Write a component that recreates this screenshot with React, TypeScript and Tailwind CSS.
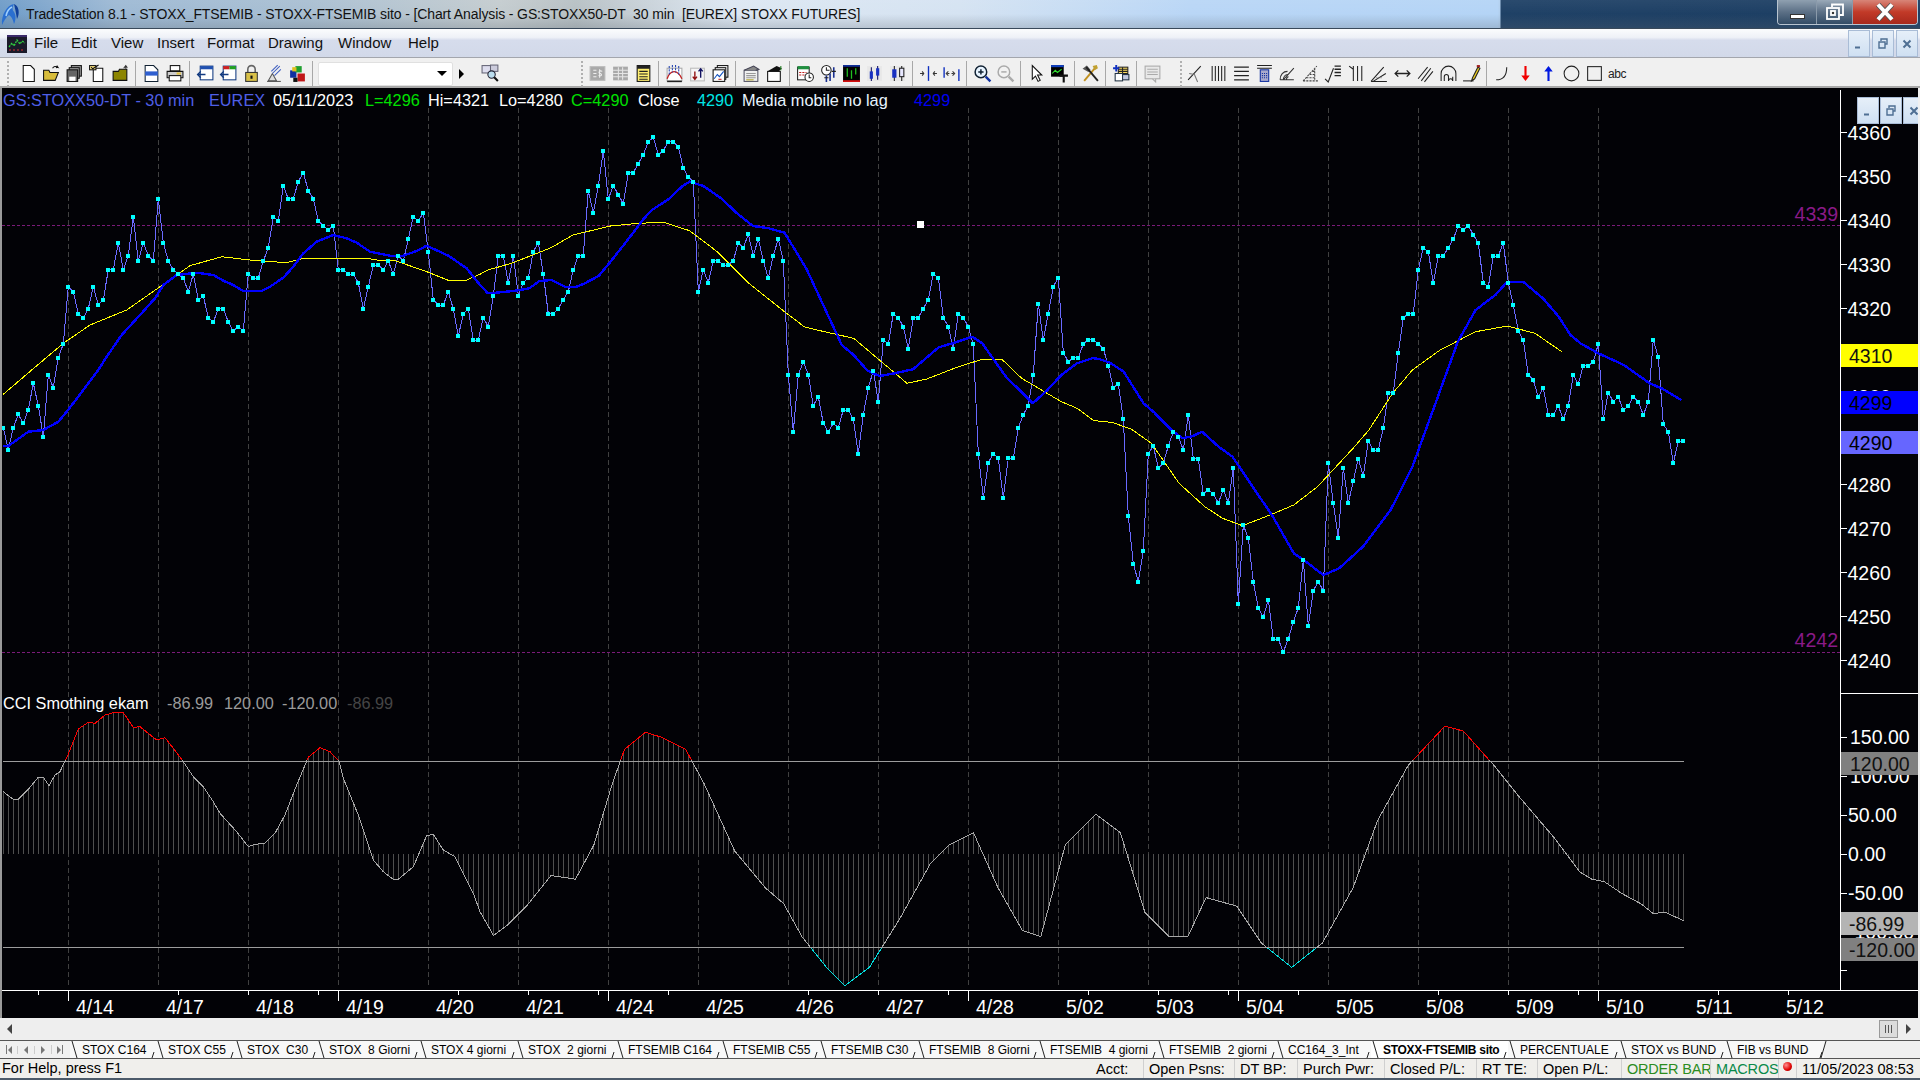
import React from "react";

const y9 = [1013,1080,1013,973,1000,960,880,947,1040,855,893,803,762,590,605,672,684,656,590,645,630,539,539,458,539,497,380,513,458,497,513,326,458,513,539,552,565,605,552,630,618,684,696,656,656,696,723,710,723,551,564,564,513,473,380,393,288,326,326,275,248,302,326,393,407,420,407,539,539,552,552,578,657,590,525,525,539,513,552,497,513,447,380,393,368,485,630,645,645,605,657,738,672,657,750,750];
const y11 = [593,620,527,407,407,488,407,527,488,473,395,368,461,581,581,566,539,515,449,407,407,212,279,197,92,237,197,224,251,158,158,131,104,65,52,104,92,65,65,80,145,171,185,515,449,488,422,422,435,435,422,368,383,343,407,356,422,474,407,356,422,764,935,764,725,764,857,830,910,936,910,923,870,870,897,1001,884,803,752,845,659,672,581,593,620,686,593,593,566,539,461,473,593,620,686,581,593,620,672,1001,1133,1028,1001,1015,1133,1015,1015,923,884,857,764,553,659,581,500,473,698,725,713,713,672,659,659,672];
const y12 = [386,437,504,491,597,887,1031,1085,993,701,678,744,730,678,636,650,690,585,716,716,821,809,821,849,809,849,743,1151,915,954,1085,1164,1191,1139,1257,1257,1296,1257,1205,1164,1020,1218,1112,1085,1112,730,849,954,743,849,783,716,769,663,690,690,624,518,518,399,294,281,281,150,83,96,188,108,108,83,57,17,30,17,44,69,188,201,108,108,69,188,255,333,360,465,480,531,504,585,585,558,597,558,465,492,437,437,425,372,597,518,545,531,570,558,531,545,585,545,359,412,612,636,729,663,663];
const closes = [...y9.map(v => 90 + v / 3), ...y11.map(v => 120 + v / 3), ...y12.map(v => 220 + v / 3)];
const closePts = closes.map((y, i) => [3.3 + 5 * i, y] as [number, number]);

type P = [number, number];
const f9 = (a: P[]): P[] => a.map(([x, y]) => [x / 3, 90 + y / 3]);
const f11 = (a: P[]): P[] => a.map(([x, y]) => [480 + x / 2.529, 120 + y / 3]);
const f12 = (a: P[]): P[] => a.map(([x, y]) => [1100 + x / 2.529, 220 + y / 3]);
const str = (a: P[]) => a.map(([x, y]) => `${x.toFixed(1)},${y.toFixed(1)}`).join(" ");

const blue: P[] = [
  ...f9([[10,1068],[25,1068],[50,1050],[85,1025],[130,1020],[175,995],[200,965],[235,920],[295,840],[320,800],[365,735],[420,675],[465,625],[490,585],[530,555],[590,548],[640,555],[670,572],[700,585],[730,603],[785,603],[810,590],[850,563],[880,530],[910,490],[950,455],[1000,435],[1040,445],[1070,458],[1110,485],[1170,497],[1210,497],[1250,483],[1280,467],[1345,497],[1400,535],[1440,585]]),
  ...f11([[20,520],[40,518],[90,512],[125,505],[150,483],[180,480],[215,500],[240,502],[265,490],[300,468],[330,425],[370,365],[415,295],[435,270],[480,235],[510,200],[530,185],[565,198],[610,235],[650,280],[690,318],[730,325],[770,338],[825,445],[915,675],[945,705],[980,752],[1010,768],[1040,762],[1095,748],[1160,682],[1200,668],[1245,650],[1270,670],[1330,770],[1398,850],[1435,810],[1470,765],[1510,730],[1550,714],[1568,718]]),
  ...f12([[25,428],[60,455],[110,550],[135,575],[185,635],[210,655],[235,648],[258,635],[300,680],[335,710],[400,825],[435,885],[490,1000],[515,1020],[565,1065],[605,1045],[665,980],[735,870],[790,740],[850,545],[905,365],[950,270],[1000,225],[1030,185],[1070,185],[1120,235],[1160,290],[1190,345],[1215,370],[1260,400],[1325,435],[1390,490],[1420,505],[1470,540]]),
];
const yellow: P[] = [
  ...f9([[10,913],[95,840],[190,760],[270,705],[380,660],[480,590],[570,527],[665,500],[750,510],[860,518],[910,505],[1100,505],[1130,510],[1180,510],[1280,545],[1350,573],[1400,570],[1440,553]]),
  ...f11([[20,450],[80,430],[180,383],[235,345],[330,318],[400,310],[465,307],[530,332],[600,395],[680,490],[770,575],[820,620],[860,632],[945,655],[1080,790],[1130,777],[1210,740],[1270,718],[1320,718],[1370,775],[1470,845],[1510,865],[1550,900],[1568,904]]),
  ...f12([[30,607],[80,628],[130,670],[200,790],[265,860],[310,895],[360,917],[430,885],[490,855],[550,800],[640,685],[680,630],[740,520],[790,450],[860,390],[950,335],[1030,318],[1100,340],[1170,397]]),
];
const cci: P[] = [
  ...([[10,335],[40,358],[55,358],[90,322],[115,292],[130,292],[147,317],[165,285],[180,275],[205,222],[235,147],[265,127],[285,130],[315,105],[345,97],[370,98],[400,142],[420,140],[470,180],[495,173],[520,205],[550,245],[580,290],[610,320],[640,365],[660,400],[710,455],[745,500],[765,493],[795,490],[825,460],[855,405],[890,315],[925,232],[960,203],[990,215],[1017,243],[1030,295],[1075,405],[1120,540],[1150,575],[1180,598],[1195,598],[1240,560],[1280,467],[1300,463],[1330,510],[1365,530],[1395,590],[1420,640],[1440,695]] as P[]).map(([x, y]) => [x / 3, 680 + y / 3] as P),
  ...([[403,764],[415,755],[430,740],[450,715],[470,718],[485,690],[500,640],[510,612],[527,598],[540,602],[560,612],[575,640],[600,695],[625,725],[640,738],[655,765],[675,790],[690,805],[710,790],[735,750],[760,705],[775,690],[795,680],[815,725],[835,760],[850,765],[870,690],[895,665],[915,680],[935,745],[955,765],[970,765],[985,733],[1010,740],[1030,770],[1055,790],[1080,770],[1105,725],[1125,670],[1150,625],[1180,593],[1195,597],[1220,625],[1240,650],[1270,685],[1290,712],[1300,718],[1310,720],[1325,730],[1340,738],[1350,746],[1360,745],[1375,752]] as P[]).map(([x, y]) => [x * 1.2245, y * 1.2245] as P),
];
const at = (a: P[], x: number) => {
  for (let i = 1; i < a.length; i++) {
    if (x <= a[i][0]) {
      const [x0, y0] = a[i - 1];
      const [x1, y1] = a[i];
      return y0 + ((y1 - y0) * (x - x0)) / (x1 - x0);
    }
  }
  return a[a.length - 1][1];
};
const hist = closePts.map(([x]) => Math.round(x));

const gridX = Array.from({ length: 18 }, (_, k) => 68 + 90 * k);
const priceLabels = [4360,4350,4340,4330,4320,4310,4300,4290,4280,4270,4260,4250,4240];
const dates = ["4/14","4/17","4/18","4/19","4/20","4/21","4/24","4/25","4/26","4/27","4/28","5/02","5/03","5/04","5/05","5/08","5/09","5/10","5/11","5/12"];
const shortTicks = [38,178,248,318,458,528,598,668,808,878,948,1088,1158,1228,1298,1438,1508,1578,1718,1788];
const longTicks = [68,338,608,968,1238,1598];
const cciTicks: [number, string, number][] = [[737,"150.00",1850],[776,"100.00",1850],[815,"50.00",1848],[854,"0.00",1848],[893,"-50.00",1848],[932,"-100.00",1848]];
const headItems: [number, string, string][] = [
  [3,"GS:STOXX50-DT - 30 min","#4f5fe6"],[209,"EUREX","#4f5fe6"],[273,"05/11/2023","#ffffff"],[365,"L=4296","#00e000"],[428,"Hi=4321","#ffffff"],[499,"Lo=4280","#ffffff"],[571,"C=4290","#00e000"],[638,"Close","#ffffff"],[697,"4290","#00e5e5"],[742,"Media mobile no lag","#e8f4ff"],[914,"4299","#0000f0"],
];
const cciHead: [number, string, string][] = [[3,"CCI Smothing ekam","#ffffff"],[167,"-86.99","#9a9a9a"],[224,"120.00","#9a9a9a"],[282,"-120.00","#9a9a9a"],[347,"-86.99","#454545"]];

function Chart() {
  return (
    <svg width={1916} height={930} viewBox="2 88 1916 930" className="block">
      <defs>
        <clipPath id="over"><rect x="0" y="680" width="1920" height="80" /></clipPath>
        <clipPath id="under"><rect x="0" y="948" width="1920" height="60" /></clipPath>
      </defs>
      <g shapeRendering="crispEdges">
        {gridX.map(x => <line key={x} x1={x + 0.5} x2={x + 0.5} y1={108} y2={987} stroke="#404040" strokeDasharray="5 3" />)}
        <line x1={2} x2={1840} y1={225} y2={225} stroke="#7a1a78" strokeDasharray="3 2" />
        <line x1={2} x2={1840} y1={652.5} y2={652.5} stroke="#7a1a78" strokeDasharray="3 2" />
        {hist.map(x => <line key={x} x1={x + 0.5} x2={x + 0.5} y1={854} y2={at(cci, x)} stroke="#4e4e4e" />)}
        <line x1={3} x2={1684} y1={761.5} y2={761.5} stroke="#9c9c9c" />
        <line x1={3} x2={1684} y1={947.5} y2={947.5} stroke="#9c9c9c" />
      </g>
      <g shapeRendering="crispEdges" fill="none">
        <polyline points={str(closePts)} stroke="#6a6aff" strokeWidth={1} />
        <polyline points={str(yellow)} stroke="#ffff00" strokeWidth={1} />
        <polyline points={str(blue)} stroke="#0000ff" strokeWidth={2.4} strokeLinejoin="round" />
        <polyline points={str(cci)} stroke="#a8a8a8" strokeWidth={1} />
        <polyline points={str(cci)} stroke="#ff0000" strokeWidth={1} clipPath="url(#over)" />
        <polyline points={str(cci)} stroke="#00e0e0" strokeWidth={1} clipPath="url(#under)" />
      </g>
      {closePts.map(([x, y]) => <rect key={x} x={Math.round(x) - 2} y={Math.round(y) - 2} width={4} height={4} fill="#00ffff" shapeRendering="crispEdges" />)}
      <rect x={917} y={221} width={7} height={7} fill="#ffffff" />

      <g className="text-[16.3px]">
        {headItems.map(([x, t, c]) => <text key={x} x={x} y={106} fill={c} xmlSpace="preserve">{t}</text>)}
        {cciHead.map(([x, t, c]) => <text key={x} x={x} y={709} fill={c}>{t}</text>)}
      </g>
      <g className="text-[19.5px]">
        <text x={1838} y={221} fill="#8a1a88" textAnchor="end">4339</text>
        <text x={1838} y={647} fill="#8a1a88" textAnchor="end">4242</text>
        <g shapeRendering="crispEdges">
          <line x1={1840.5} x2={1840.5} y1={90} y2={990} stroke="#ffffff" />
          <line x1={1840} x2={1918} y1={693} y2={693} stroke="#ffffff" />
          <line x1={2} x2={1918} y1={990.5} y2={990.5} stroke="#ffffff" />
          {shortTicks.map(x => <line key={x} x1={x} x2={x} y1={990} y2={995} stroke="#ffffff" />)}
          {longTicks.map(x => <line key={x} x1={x} x2={x} y1={990} y2={1001} stroke="#ffffff" />)}
          {priceLabels.map(p => { const y = 132 + (44 * (4360 - p)) / 10; return <line key={p} x1={1841} x2={1847} y1={y} y2={y} stroke="#ffffff" />; })}
          {[...cciTicks.map(t => t[0]), 970].map(y => <line key={y} x1={1841} x2={1847} y1={y} y2={y} stroke="#ffffff" />)}
        </g>
        {priceLabels.map(p => <text key={p} x={1847.500} y={140 + (44 * (4360 - p)) / 10} fill="#ffffff">{p}</text>)}
        {cciTicks.map(([y, t, x]) => <text key={t} x={x} y={y + 7} fill="#ffffff">{t}</text>)}
        {dates.map((d, i) => <text key={d} x={76 + 90 * i} y={1014} fill="#ffffff">{d}</text>)}

        <rect x={1841} y={344} width={77} height={23} fill="#ffff00" />
        <text x={1849} y={363} fill="#111">4310</text>
        <rect x={1841} y={391} width={77} height={23} fill="#0000ff" />
        <text x={1849} y={410} fill="#000">4299</text>
        <rect x={1841} y={431} width={77} height={23} fill="#6666ff" />
        <text x={1849} y={450} fill="#000">4290</text>
        <rect x={1841} y={752} width={77} height={23} fill="#808080" />
        <text x={1850} y={771} fill="#111">120.00</text>
        <rect x={1841} y={912} width={77} height={23} fill="#b4b4b4" />
        <text x={1849} y={931} fill="#111">-86.99</text>
        <rect x={1841} y={938} width={77} height={23} fill="#808080" />
        <text x={1849} y={957} fill="#111">-120.00</text>
      </g>
    </svg>
  );
}

function MdiBtn({ kind, w = "w-[22px]" }: { kind: number; w?: string }) {
  return (
    <div className={`flex h-[27px] shrink-0 items-center justify-center border border-[#a9bcd6] bg-[linear-gradient(180deg,#e6eff9,#cfe0f2)] ${w}`}>
      <svg width={12} height={12} viewBox="0 0 12 12" fill="none" stroke="#4f6f93" strokeWidth={1.4}>
        {kind === 0 && <path d="M2 9.5h5" strokeWidth={2} />}
        {kind === 1 && <path d="M4 3V1h6v5H8M2 4h6v6H2z" />}
        {kind === 2 && <path d="M2.5 2.5l7 7M9.5 2.5l-7 7" strokeWidth={2} />}
      </svg>
    </div>
  );
}

const Ico = ({ children }: { children: React.ReactNode }) => (
  <span className="flex h-[24px] w-[23px] shrink-0 items-center justify-center">
    <svg width={19} height={19} viewBox="0 0 18 18">{children}</svg>
  </span>
);
const Sep = () => (
  <span className="flex h-[26px] w-[8px] shrink-0 justify-center"><span className="h-full w-px bg-[#a8a8a8]" /></span>
);
const Grip = () => <span className="h-[26px] w-0 shrink-0 border-l-2 border-dotted border-[#b0b0b0]" />;

const k = "#111";
const icons: Record<string, React.ReactNode> = {
  doc: <path d="M4 1.5h7l3.5 3.5v11.5H4z" fill="#fff" stroke={k} />,
  open: <><path d="M1.5 6h5l1 2h8l-3 7.5H1.5z" fill="#d8bd3c" stroke={k} /><path d="M10 4c1-2 3-2 5-1l-1-1.5M15 3l-1.800 .6" fill="none" stroke={k} /></>,
  saves: <><rect x="6" y="1.500" width="9.500" height="10" fill="#999" stroke={k} /><rect x="4" y="3.500" width="9.500" height="10" fill="#aaa" stroke={k} /><rect x="2" y="5.500" width="10" height="11" fill="#666" stroke={k} /><rect x="4" y="12" width="6" height="4" fill="#fff" /></>,
  check: <><path d="M5 4h9v12.500H5z" fill="#fff" stroke={k} /><rect x="1.500" y="1.500" width="6" height="4" fill="#ffe680" stroke={k} /><path d="M3 3l1.500 1.500L10 1" fill="none" stroke={k} /></>,
  olive: <><path d="M2 7h5l1-2h7v10.500H2z" fill="#8c8500" stroke={k} /><path d="M12 4l2-2.500 1.500 2M14 1.500v3" fill="none" stroke="#333" /></>,
  blueDoc: <><path d="M3 1.500h8l4 4v11H3z" fill="#fff" stroke="#123" /><rect x="3" y="7" width="12" height="4" fill="#2f5fd0" /></>,
  print: <><rect x="5" y="1.500" width="9" height="5" fill="#fff" stroke={k} /><path d="M2 7h15v6H2z" fill="#ccc" stroke={k} /><rect x="4" y="11" width="11" height="5" fill="#fff" stroke={k} /><rect x="11" y="8" width="4" height="2" fill="#e0c040" /></>,
  winA: <><rect x="4" y="2" width="12" height="13" fill="#fff" stroke="#123a80" /><rect x="4" y="2" width="12" height="3" fill="#2050b0" /><path d="M9 10H1.500M4.500 7l-3 3 3 3" fill="none" stroke="#123a80" strokeWidth={1.3} /></>,
  winB: <><rect x="4" y="2" width="12" height="13" fill="#fff" stroke="#123a80" /><rect x="4" y="2" width="6" height="3" fill="#d02020" /><rect x="10" y="2" width="6" height="3" fill="#20a020" /><path d="M9 10H1.500M4.500 7l-3 3 3 3" fill="none" stroke="#123a80" strokeWidth={1.3} /></>,
  lock: <><path d="M5.500 8V5a3.500 3.500 0 017 0v3" fill="none" stroke="#666" strokeWidth={1.5} /><rect x="3.500" y="8" width="11" height="8.500" fill="#d8c048" stroke="#333" /><rect x="8" y="11" width="2" height="3" fill="#111" /></>,
  sat: <><path d="M3 16l4-7 4 7z" fill="#ddd" stroke="#555" /><path d="M7 9l7-7M9 11l6-6M6 7l6-6" stroke="#4060c0" /><path d="M2 16.500h13" stroke="#555" /></>,
  cubes: <><rect x="2" y="6" width="6" height="7" fill="#1030a0" /><rect x="7" y="2" width="6" height="6" fill="#20a030" /><rect x="9" y="9" width="7" height="7.500" fill="#c01818" /><rect x="4" y="3" width="4" height="4" fill="#e0c020" /><rect x="5" y="13" width="4" height="4" fill="#111" /></>,
  search: <><rect x="1" y="1.500" width="9" height="7" fill="#dde" stroke="#667" /><rect x="9" y="1" width="7" height="6" fill="#ccd" stroke="#667" /><circle cx="10" cy="10" r="3.500" fill="#bde" stroke="#223" /><path d="M12.500 12.500l3.500 3.500" stroke="#111" strokeWidth={2} /></>,
  gCalc: <><rect x="2" y="2.500" width="14" height="13" fill="#a8a8a8" stroke="#bbb" /><path d="M5 6h3M5 9h3M5 12h3" stroke="#eee" /><path d="M11 5v8M13.500 7c-3-1.500-4 1.500-2 2s2 3-1.500 2" fill="none" stroke="#eee" /></>,
  gTable: <><rect x="2" y="2.500" width="14" height="13" fill="#a8a8a8" /><path d="M2 6h14M2 9h14M2 12h14M7 3v12M11 3v12" stroke="#e5e5e5" /></>,
  yTable: <><rect x="3" y="1.500" width="12" height="15" fill="#ffef70" stroke={k} /><rect x="3" y="1.500" width="12" height="3" fill="#222" /><path d="M5 7h8M5 9.500h8M5 12h8M5 14.500h8" stroke="#222" /></>,
  arc: <><rect x="2" y="4" width="14" height="12" fill="#fff" stroke="#aaa" /><path d="M2 14c3-9 10-9 14 0" fill="none" stroke="#c02020" strokeWidth={1.300} /><path d="M4 2v9M7 1v7M10 1v7M13 2v9" stroke="#2040b0" strokeDasharray="2 1" /><path d="M2 16.500h14" stroke="#222" strokeWidth={1.400} /></>,
  arrows: <><rect x="2.500" y="4" width="13" height="12" fill="#f5f5f5" stroke="#bbb" /><path d="M6.500 7v7M4.500 12l2 2.500 2-2.500" fill="none" stroke="#901010" strokeWidth={1.300} /><path d="M12 13V5M10 7l2-2.500L14 7" fill="none" stroke="#101060" strokeWidth={1.300} /></>,
  stack: <><rect x="6" y="1.500" width="10" height="11" fill="#fff" stroke={k} /><rect x="4" y="3.500" width="10" height="11" fill="#fff" stroke={k} /><rect x="2" y="5.500" width="11" height="11" fill="#fff" stroke={k} /><path d="M3 14l3-4 2 2 4-5" fill="none" stroke="#1050c0" /><path d="M7 14.500h3" stroke="#c02020" /></>,
  note: <><rect x="2" y="6" width="13" height="10.500" fill="#f0f0f0" stroke="#556" /><path d="M2 6l9-4 5 3-3 1" fill="#888" stroke="#445" /><path d="M4 9h9M4 11h9M4 13h9" stroke="#999" /><path d="M4 15h7" stroke="#b0a020" /></>,
  house: <><rect x="2.500" y="7" width="12" height="9.500" fill="#fff" stroke={k} /><path d="M2 7l9-5 5 2-3 3z" fill="#111" /><path d="M15 2v4" stroke="#208020" /></>,
  cal: <><rect x="1.500" y="3" width="11" height="12" fill="#fff" stroke="#222" /><rect x="1.500" y="2" width="11" height="3" fill="#209040" /><path d="M3 8h7M3 10.500h6" stroke="#c02020" strokeDasharray="2 1" /><circle cx="12.500" cy="12.500" r="4" fill="#fff" stroke="#222" /><path d="M12.500 10v3h2" fill="none" stroke="#222" /></>,
  clock: <><circle cx="7" cy="6" r="4.500" fill="#fff" stroke="#222" /><path d="M7 3v3h3" fill="none" stroke="#222" /><path d="M7 11v6M10.500 9v7M14 3v10" stroke="#1a3090" strokeWidth={1.500} /><path d="M5 13h4M12 7h4" stroke="#222" /></>,
  bars: <><rect x="1" y="1" width="16" height="16" fill="#000" /><rect x="1" y="1" width="16" height="1.600" fill="#1030a0" /><rect x="1" y="15.400" width="16" height="1.600" fill="#e01010" strokeDasharray="1 1" /><path d="M5 4v8M9 6v8M13 4v6" stroke="#20c020" strokeWidth={1.200} /></>,
  cBlue: <><rect x="2" y="2" width="14" height="14" fill="#e8e8e8" /><path d="M6 3v13M12 2v13" stroke="#101060" /><rect x="4.500" y="7" width="3" height="7" fill="#1830c0" /><rect x="10.500" y="4" width="3" height="7" fill="#1830c0" /></>,
  cGrey: <><rect x="2" y="2" width="14" height="14" fill="#e8e8e8" /><path d="M6 2v14M13 2v14" stroke="#222" /><rect x="4" y="5" width="4" height="8" fill="#1830c0" /><rect x="11" y="4" width="4" height="8" fill="#e8e8ff" stroke="#222" /></>,
  sp1: <><path d="M9 2v14" stroke="#1030c0" strokeWidth={1.300} /><path d="M1 9h3M3 7l1.500 2L3 11M17 9h-3M15 7l-1.500 2 1.500 2" fill="none" stroke="#333" /></>,
  sp2: <><path d="M2 3v10M16 5v11" stroke="#1030c0" strokeWidth={1.300} /><path d="M5 9h2M9 9h2M6 7L4 9l2 2M10 7l2 2-2 2" fill="none" stroke="#333" /></>,
  zin: <><circle cx="7.500" cy="7.500" r="5.500" fill="#e8f4ff" stroke="#123" strokeWidth={1.400} /><path d="M5 7.500h5M7.500 5v5" stroke="#123" strokeWidth={1.400} /><path d="M12 12l4.500 4.500" stroke="#1030a0" strokeWidth={2.200} /></>,
  zout: <><circle cx="7.500" cy="7.500" r="5.500" fill="#f2f2f2" stroke="#aaa" strokeWidth={1.400} /><path d="M5 7.500h5" stroke="#aaa" strokeWidth={1.400} /><path d="M12 12l4.500 4.500" stroke="#aaa" strokeWidth={2.200} /></>,
  cur: <path d="M5 1.500v13l3-3 2.500 5 2-1-2.500-5h4z" fill="#fff" stroke={k} />,
  chartT: <><rect x="1" y="1" width="12" height="11" fill="#000" /><rect x="1" y="1" width="12" height="2" fill="#1040c0" /><path d="M2 9l3-3 2 2 4-3" fill="none" stroke="#30e030" /><path d="M9 11h8M13 11v6.500" stroke="#111" strokeWidth={2} /></>,
  tools: <><path d="M3 16L14 3" stroke="#c09020" strokeWidth={1.800} /><path d="M1.500 4.500l4-3 3.500 4-2 2z" fill="#555" /><path d="M5 3l11 13" stroke="#222" strokeWidth={1.800} /><path d="M11 2l4-1 1 3-3 2z" fill="#c0a030" /></>,
  add: <><rect x="6" y="3" width="9" height="6" fill="#ffe060" stroke="#222" /><path d="M6 5h9M6 7h9M10 3v6" stroke="#222" /><rect x="7" y="10" width="9" height="5" fill="#c0c8e0" stroke="#234" /><rect x="3" y="9" width="7" height="7" fill="#fff" stroke="#234" /><path d="M4 1v6M1 4h6" stroke="#1030c0" strokeWidth={1.800} /></>,
  gNote: <><rect x="2" y="2" width="14" height="12" fill="#e8e8e8" stroke="#aaa" /><path d="M4 5h10M4 7.500h10M4 10h10" stroke="#aaa" /><path d="M9 14l3 3v-3" fill="#ddd" stroke="#aaa" /></>,
  line: <><path d="M2 15L14 2" stroke="#222" /><path d="M3 9l5 1 3 7" fill="none" stroke="#777" /></>,
  vlines: <path d="M3 2v14M6 2v14M9 2v14M12 2v14M15 2v14" stroke="#222" />,
  hlines: <path d="M2 3h14M2 7h14M2 11h14M2 15h14" stroke="#222" strokeWidth={1.200} />,
  calc: <><path d="M2 1.500h14M2 4h14" stroke="#222" /><rect x="5" y="5.500" width="8" height="11" fill="#aac" stroke="#1030a0" /><path d="M6.500 9h5M6.500 11h5M6.500 13h5" stroke="#1030a0" strokeDasharray="1 1" /></>,
  fan: <><path d="M2 15c0-5 3-8 7-8M5 15c0-3 2-5 4-5M8 15c0-2 1-3 2-3M2 15h13M5 15L15 4" fill="none" stroke="#333" /></>,
  fib: <><path d="M2 16h14M2 16L15 2M5 13h8M8 10h6M11 7h3M13 4v12" fill="none" stroke="#444" strokeDasharray="2 1" /></>,
  flag: <><path d="M1 14l3 3 5-13" fill="none" stroke="#222" /><path d="M10 2h6M10 5h6M10 8h6M10 11h6" stroke="#222" strokeWidth={1.300} /></>,
  hfork: <path d="M2 2l4 3M6 2v14M10 2v14M14 2v14" fill="none" stroke="#222" />,
  angle: <><path d="M1 16.500h15M1 16.500L13 3M3 16.500L15 9" fill="none" stroke="#222" /><path d="M6 13h5" stroke="#777" strokeDasharray="1 1" /></>,
  ruler: <path d="M2 9h14M5 6L2 9l3 3M13 6l3 3-3 3" fill="none" stroke="#222" strokeWidth={1.200} />,
  slashes: <path d="M2 14L11 3M5 16L14 4M8 17L16 7" stroke="#222" />,
  ghost: <path d="M2 16V9a7 7 0 0114 0v7M5 16v-4a2 2 0 014 0v4a2 2 0 014 0M9 16v-4M13 16v-4" fill="none" stroke="#222" />,
  pen: <><path d="M1 16h10" stroke="#222" /><path d="M9 16l1-3 5-10 2 1-5 10z" fill="#f0d020" stroke="#222" /><rect x="14" y="1" width="3" height="2" fill="#a02020" /></>,
  curve: <path d="M3 15c6 0 10-4 10-12" fill="none" stroke="#222" />,
  red: <path d="M8 2h2v9h3l-4 5-4-5h3z" fill="#f00000" />,
  up: <path d="M8 16h2V7h3L9 2 5 7h3z" fill="#0018e0" />,
  circ: <circle cx="9" cy="9" r="7" fill="none" stroke="#222" />,
  rect: <rect x="2.500" y="2.500" width="13" height="13" fill="none" stroke="#222" />,
};
const toolbarGroups = [
  ["doc","open","saves","check","olive"],
  ["blueDoc","print"],
  ["winA","winB","lock","sat","cubes"],
];
const toolbarGroups2 = [
  ["gCalc","gTable","yTable"],
  ["arc","arrows","stack"],
  ["note","house"],
  ["cal","clock","bars","cBlue","cGrey"],
  ["sp1","sp2"],
  ["zin","zout"],
  ["cur","chartT"],
  ["tools"],
  ["add"],
  ["gNote"],
];
const toolbarGroups3 = [
  ["line","vlines","hlines","calc","fan","fib","flag","hfork","angle","ruler","slashes","ghost","pen"],
  ["curve","red","up","circ","rect"],
];
const Groups = ({ g }: { g: string[][] }) => (
  <>
    {g.map((grp, i) => (
      <React.Fragment key={grp[0]}>
        {i > 0 && <Sep />}
        {grp.map(n => <Ico key={n}>{icons[n]}</Ico>)}
      </React.Fragment>
    ))}
  </>
);

const menus: [string, string][] = [["File","w-[37px]"],["Edit","w-[40px]"],["View","w-[46px]"],["Insert","w-[50px]"],["Format","w-[61px]"],["Drawing","w-[70px]"],["Window","w-[70px]"],["Help","w-[40px]"]];

const tabs: [string, string, boolean?][] = [
  ["STOX C164","w-[86px]"],["STOX C55","w-[79px]"],["STOX  C30","w-[82px]"],["STOX  8 Giorni","w-[102px]"],["STOX 4 giorni","w-[97px]"],["STOX  2 giorni","w-[100px]"],
  ["FTSEMIB C164","w-[105px]"],["FTSEMIB C55","w-[98px]"],["FTSEMIB C30","w-[98px]"],["FTSEMIB  8 Giorni","w-[121px]"],["FTSEMIB  4 giorni","w-[119px]"],["FTSEMIB  2 giorni","w-[119px]"],
  ["CC164_3_Int","w-[95px]"],["STOXX-FTSEMIB sito","w-[137px]",true],["PERCENTUALE","w-[111px]"],["STOX vs BUND","w-[106px]"],["FIB vs BUND","w-[99px]"],
];

const status: [string, string, string][] = [
  ["Acct:","w-[52px] border-l-0","text-black"],["Open Psns:","w-[91px]","text-black"],["DT BP:","w-[63px]","text-black"],["Purch Pwr:","w-[87px]","text-black"],["Closed P/L:","w-[92px]","text-black"],["RT TE:","w-[61px]","text-black"],["Open P/L:","w-[84px]","text-black"],["ORDER BAR","w-[89px] pl-[4px] tracking-[-0.2px]","text-[#2c8c1e]"],["MACROS","w-[68px] tracking-[-0.2px]","text-[#0a8a4a]"],
];

export default function App() {
  return (
    <div className="flex h-[1080px] w-[1920px] flex-col overflow-hidden bg-[#f0f0f0] font-['Liberation_Sans',Arial,sans-serif] text-black">
      {/* title bar */}
      <div className="flex h-[29px] shrink-0 items-start justify-between border-b border-[#39495a] bg-[linear-gradient(180deg,rgba(255,255,255,0.05)_0%,rgba(255,255,255,0)_50%,rgba(90,100,110,0.25)_100%),linear-gradient(90deg,#6f9cc8_0%,#9db9d4_6%,#a9bfd2_16%,#c4cccf_26%,#b7c0c4_30%,#dde7f2_38%,#d5e3f2_50%,#b9d6f6_62%,#b4d4f6_78%,#b2d0ef_78.1%,#1f4166_78.2%,#1c3e63_100%)]">
        <div className="flex items-center">
          <svg width={20} height={24} viewBox="0 0 20 24" className="ml-[1px] mt-[2px] shrink-0">
            <path d="M1 22C0 12 6 2 13 1c-2 3-2 6 0 8 2 3 2 8 0 12-1-5-3-8-5-9-3 2-5 6-7 10z" fill="#2a6fd0" />
            <path d="M13 1c5 2 6 9 3 15-1-6-2-11-3-15z" fill="#0f3f9a" />
            <path d="M5 13C6 8 9 5 11 4" stroke="#9fd0ff" strokeWidth={1.500} fill="none" />
          </svg>
          <span className="ml-[5px] mt-[1px] whitespace-pre text-[14px] leading-[26px] tracking-[-0.12px] text-[#111]">TradeStation 8.1 - STOXX_FTSEMIB - STOXX-FTSEMIB sito - [Chart Analysis - GS:STOXX50-DT  30 min  [EUREX] STOXX FUTURES]</span>
        </div>
        <div className="mr-[2px] flex h-[25px] shrink-0 overflow-hidden rounded-b-[4px] border border-t-0 border-[#b8c4d0]">
          <div className="flex w-[38px] items-end justify-center bg-[linear-gradient(180deg,#8fa0b0,#5c7086_50%,#334c66)] pb-[5px]"><span className="h-[5px] w-[15px] border border-[#333] bg-white" /></div>
          <div className="flex w-[36px] items-center justify-center border-l border-[#8a9aaa] bg-[linear-gradient(180deg,#9aa9b8,#5c7086_50%,#334c66)]">
            <svg width={20} height={18} viewBox="0 0 20 18" fill="none" stroke="#fff" strokeWidth={1.800}><path d="M7 4V1.500h11V12h-3" /><rect x="2" y="5" width="12" height="11" /><rect x="6" y="8" width="4" height="4" fill="#333" /></svg>
          </div>
          <div className="flex w-[65px] items-center justify-center border-l border-[#8a9aaa] bg-[linear-gradient(180deg,#d88578,#c23a28_50%,#a8291c)]">
            <svg width={20} height={18} viewBox="0 0 20 18" fill="none"><path d="M3 1.500l14 15M17 1.500l-14 15" stroke="#555" strokeWidth={5.500} /><path d="M3 1.500l14 15M17 1.500l-14 15" stroke="#fff" strokeWidth={4} /></svg>
          </div>
        </div>
      </div>

      {/* menu bar */}
      <div className="flex h-[29px] shrink-0 items-center justify-between border-b border-[#a3a6ad] bg-[linear-gradient(180deg,#fbfcfd_0%,#eef1f7_30%,#d6dcec_40%,#d2d9e9_100%)] pl-[7px] pr-[2px] pt-[1px]">
        <div className="flex items-center">
          <svg width={20} height={18} viewBox="0 0 20 18" className="mr-[7px]">
            <rect width="20" height="18" fill="#1a1a2a" />
            <rect width="20" height="2" fill="#3a2a6a" />
            <path d="M2 12l3-4 2 3 3-6 3 4 2-3 3 2" fill="none" stroke="#30d040" strokeWidth={1.300} strokeDasharray="2 1" />
            <path d="M2 15h16" stroke="#d03030" strokeDasharray="2 2" />
          </svg>
          {menus.map(([m, w]) => <span key={m} className={`text-[15px] text-[#111] ${w}`}>{m}</span>)}
        </div>
        <div className="flex gap-[2px]">
          <MdiBtn kind={0} />
          <MdiBtn kind={1} />
          <MdiBtn kind={2} />
        </div>
      </div>

      {/* toolbar */}
      <div className="flex h-[30px] shrink-0 items-center border-b-2 border-[#a8a8a8] bg-[#f0f0f0] pl-[7px] pt-[3px]">
        <Grip />
        <span className="w-[7.500px] shrink-0" />
        <Groups g={toolbarGroups} />
        <Sep />
        <div className="ml-[1px] flex h-[24px] w-[135px] shrink-0 items-center justify-end rounded-[2px] border border-[#e0e0e0] bg-white pr-[5px]">
          <span className="h-0 w-0 border-x-[5px] border-t-[5px] border-x-transparent border-t-black" />
        </div>
        <span className="ml-[6px] h-0 w-0 shrink-0 border-y-[5px] border-l-[5px] border-y-transparent border-l-black" />
        <span className="w-[15px] shrink-0" />
        <Ico>{icons.search}</Ico>
        <span className="w-[79.500px] shrink-0" />
        <Grip />
        <span className="w-[2.500px] shrink-0" />
        <Groups g={toolbarGroups2} />
        <span className="w-[16.500px] shrink-0" />
        <Grip />
        <span className="w-[1.500px] shrink-0" />
        <Groups g={toolbarGroups3} />
        <span className="flex w-[23px] shrink-0 justify-center text-[12px] tracking-[-0.5px] text-[#222]">abc</span>
      </div>

      {/* chart */}
      <div className="relative h-[930px] shrink-0 overflow-hidden border-x-2 border-l-[#9a9a9a] border-r-[#f0f0f0] bg-[#020206]">
        <Chart />
        <div className="absolute left-[1855px] top-[9px] flex gap-[1px]">
          <MdiBtn kind={0} />
          <MdiBtn kind={1} />
          <MdiBtn kind={2} />
        </div>
      </div>

      {/* scrollbar */}
      <div className="flex h-[22px] shrink-0 items-center justify-between bg-[#eeeeee] pl-[7px] pr-[9px]">
        <span className="h-0 w-0 border-y-[5px] border-r-[5px] border-y-transparent border-r-[#444]" />
        <div className="flex items-center gap-[8px]">
          <div className="flex h-[18px] w-[19px] items-center justify-center gap-[2px] border border-[#999] bg-[#dcdcdc]">
            <span className="h-[8px] w-px bg-[#555]" /><span className="h-[8px] w-px bg-[#555]" /><span className="h-[8px] w-px bg-[#555]" />
          </div>
          <span className="h-0 w-0 border-y-[5px] border-l-[5px] border-y-transparent border-l-[#444]" />
        </div>
      </div>

      {/* tabs */}
      <div className="flex h-[19px] shrink-0 border-y border-[#555] bg-[#f0f0f0]">
        <div className="flex w-[70px] shrink-0 items-center text-[#888]">
          <span className="flex w-[17px] items-center justify-center"><span className="mr-[1px] h-[9px] w-px bg-[#777]" /><span className="h-0 w-0 border-y-[4px] border-r-[4px] border-y-transparent border-r-[#777]" /></span>
          <span className="flex w-[17px] justify-center border-l border-[#ccc]"><span className="h-0 w-0 border-y-[4px] border-r-[4px] border-y-transparent border-r-[#777]" /></span>
          <span className="flex w-[17px] justify-center border-l border-[#ccc]"><span className="h-0 w-0 border-y-[4px] border-l-[4px] border-y-transparent border-l-[#777]" /></span>
          <span className="flex w-[17px] items-center justify-center border-l border-[#ccc]"><span className="h-0 w-0 border-y-[4px] border-l-[4px] border-y-transparent border-l-[#777]" /><span className="ml-[1px] h-[9px] w-px bg-[#777]" /></span>
        </div>
        {tabs.map(([t, w, active]) => (
          <div key={t} className={`relative flex shrink-0 items-center whitespace-pre pl-[12px] text-[12px] ${w} ${active ? "bg-white font-bold tracking-[-0.3px]" : "bg-[#f8f8f8]"}`}>
            <svg width={8} height={17} viewBox="0 0 8 17" className="absolute left-[1px] top-0" fill="none" stroke="#222">
              <path d="M1 0l5 17" />
            </svg>
            <svg width={8} height={17} viewBox="0 0 8 17" className="absolute right-[-3px] top-0" fill="none" stroke="#222">
              <path d="M1 17l2-6" />
            </svg>
            {t}
          </div>
        ))}
        <div className="relative flex-1 bg-[#f0f0f0]">
          <svg width={8} height={17} viewBox="0 0 8 17" className="absolute left-[-4px] top-0" fill="none" stroke="#222"><path d="M1 17l5-17" /></svg>
        </div>
      </div>

      {/* status bar */}
      <div className="flex h-[21px] shrink-0 items-center border-b-2 border-[#4c5a6a] bg-[#f0efec] text-[14.500px]">
        <span className="w-[1091px] shrink-0 pl-[2px]">For Help, press F1</span>
        {status.map(([t, w, c]) => <span key={t} className={`h-full shrink-0 whitespace-nowrap border-l border-[#d0d0d0] pl-[5px] ${w} ${c}`}>{t}</span>)}
        <span className="flex h-full w-[18px] shrink-0 items-center justify-center border-l border-[#d0d0d0]"><span className="-mt-[5px] h-[9px] w-[9px] rounded-full bg-[radial-gradient(circle_at_35%_35%,#ff9090,#e00000_60%,#800000)]" /></span>
        <span className="h-full w-[124px] shrink-0 whitespace-nowrap border-l border-[#d0d0d0] pl-[5px]">11/05/2023 08:53</span>
      </div>
    </div>
  );
}
